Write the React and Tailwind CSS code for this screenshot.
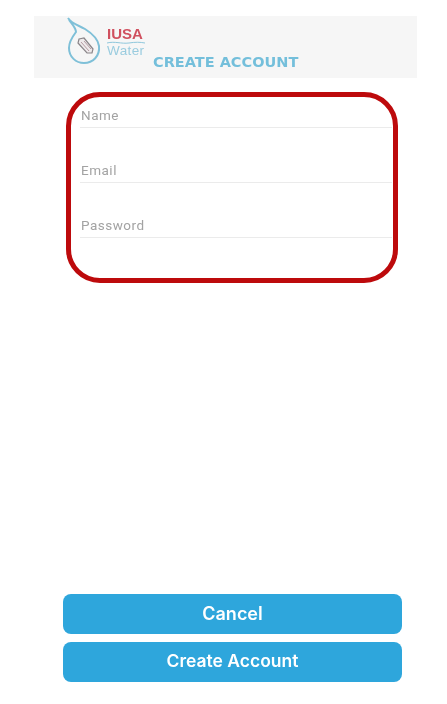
const fields = ['Name', 'Email', 'Password'];

const DropLogo = () => (
  <svg width="36" height="50" viewBox="0 0 36 50" fill="none" className="shrink-0">
    <path
      d="M2 1 C6 7 12 8 19 12 C27 17 32 22 33 29 C34 39 27 46 18 46 C10 46 3 40 3 31 C3 24 7 19 10 15 C10 11 6 7 3 3"
      stroke="#7fc0d8"
      strokeWidth="2"
    />
    <path d="M13 22 L18 21 L27 32 L26 36 L21 36 L12 26 Z" fill="#eeeaeb" stroke="#8a8589" strokeWidth="1.2" />
    <path d="M15 25 L23 34 M18 24 L25 32" stroke="#b59aa2" strokeWidth="1" />
  </svg>
);

const App = () => {
  return (
    <div className="w-[447px] h-[704px] bg-white overflow-hidden flex flex-col pt-4 blur-[0.4px] font-['Liberation_Sans',sans-serif]">
      <div className="ml-[34px] w-[383px] h-[62px] shrink-0 bg-[#f6f6f6] flex pl-[32px] pt-[1px]">
        <DropLogo />
        <div className="ml-[5px] mt-[9px] w-[38px] flex flex-col">
          <span className="text-[15px] leading-[15px] font-bold text-[#d0505f]">IUSA</span>
          <svg width="38" height="3" viewBox="0 0 38 3" fill="none">
            <path d="M0 2 C8 0 14 3 22 2 C28 1 33 1 38 2" stroke="#8fc7dc" strokeWidth="1" />
          </svg>
          <span className="text-[13.5px] leading-[13px] tracking-[0.4px] text-[#9accdf]">Water</span>
        </div>
        <div className="mt-[37px] ml-[8px] text-[14.5px] leading-4 font-bold text-[#74bfdb] whitespace-nowrap font-['DejaVu_Sans',sans-serif]">
          CREATE ACCOUNT
        </div>
      </div>

      <div className="ml-[66px] mt-[14px] w-[332px] h-[191px] shrink-0 border-[5px] border-[#bd0a0c] rounded-[34px] pl-[9px] pr-[1px] pt-[10px]">
        {fields.map((field) => (
          <div key={field} className="h-[55px] pt-[1px]">
            <div className="h-[20px] border-b border-[#ebebeb] pl-[1px] text-[13.5px] leading-[14px] tracking-[0.5px] text-[#a3a3a3] font-['Roboto',sans-serif]">
              {field}
            </div>
          </div>
        ))}
      </div>

      <div className="mt-[311px] ml-[63px] w-[339px] flex flex-col gap-2">
        <button className="h-10 pb-[2px] rounded-lg bg-[#2ea6dc] text-white text-[18px] font-semibold font-['Inter',sans-serif]">
          Cancel
        </button>
        <button className="h-10 pb-[2px] rounded-lg bg-[#2ea6dc] text-white text-[17.5px] font-semibold font-['Inter',sans-serif]">
          Create Account
        </button>
      </div>
    </div>
  );
};

export default App;
